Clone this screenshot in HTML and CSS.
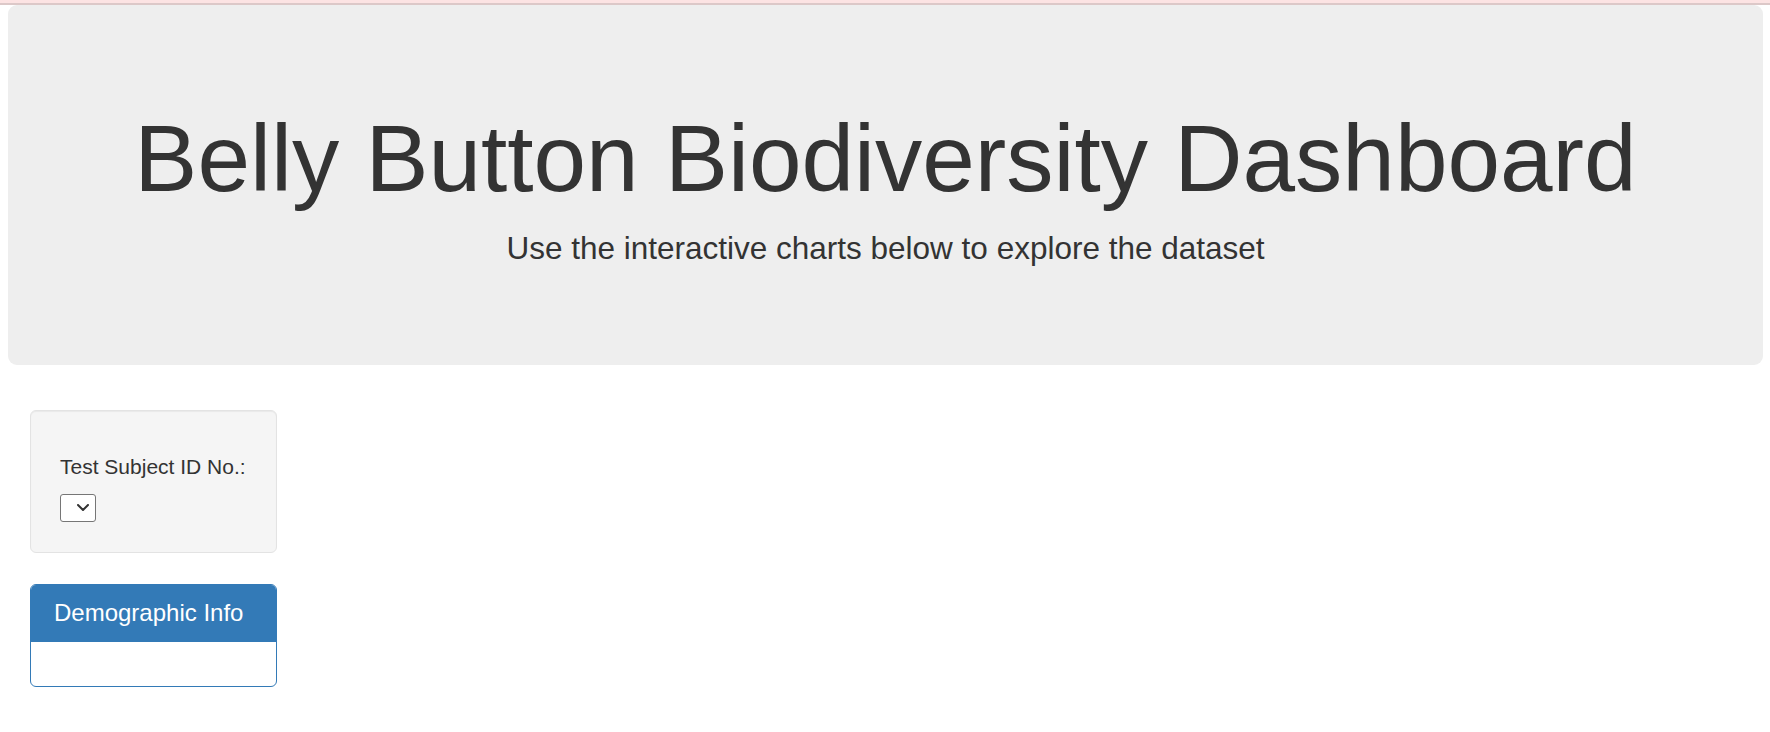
FILE: index.html
```html
<!DOCTYPE html>
<html lang="en">
<head>
<meta charset="utf-8">
<title>Belly Button Biodiversity Dashboard</title>
<link rel="stylesheet" href="styles.css">
</head>
<body>
<div class="topbar"></div>
<div class="jumbotron">
  <h1 class="title">Belly Button Biodiversity Dashboard</h1>
  <p class="lead">Use the interactive charts below to explore the dataset</p>
</div>
<div class="main">
  <div class="sidebar">
    <div class="well">
      <h5 class="field-label">Test Subject ID No.:</h5>
      <span class="select-box" role="combobox" aria-label="Test Subject ID No.">
        <svg class="chevron" width="12" height="7" viewBox="0 0 12 7"><path d="M1 1 L6 6 L11 1" fill="none" stroke="#333" stroke-width="2" stroke-linecap="round" stroke-linejoin="round"/></svg>
      </span>
    </div>
    <div class="panel">
      <div class="panel-heading">
        <h3 class="panel-title">Demographic Info</h3>
      </div>
      <div class="panel-body"></div>
    </div>
  </div>
</div>
</body>
</html>
```

FILE: styles.css
```css
html, body {
  margin: 0;
  padding: 0;
  background: #fff;
  font-family: "Liberation Sans", Arial, Helvetica, sans-serif;
  color: #333;
}

.topbar {
  height: 3px;
  background: #fce3e3;
  border-bottom: 2px solid #dcc8c8;
}

.jumbotron {
  margin: 0 7px 0 8px;
  padding: 72px 0;
  background: #eeeeee;
  border-radius: 9px;
  text-align: center;
  color: #333;
}

.title {
  margin: 30px 0 15px;
  font-size: 94.5px;
  line-height: 1.1;
  font-weight: 400;
}

.lead {
  margin: 0 0 22px;
  font-size: 31.5px;
  line-height: 45px;
  font-weight: 400;
}

.main {
  padding: 45px 0 0 30px;
}

.sidebar {
  width: 247px;
}

.well {
  box-sizing: border-box;
  width: 247px;
  padding: 29px;
  margin-bottom: 31px;
  background: #f5f5f5;
  border: 1px solid #e3e3e3;
  border-radius: 6px;
  box-shadow: inset 0 1px 1px rgba(0, 0, 0, 0.05);
}

.field-label {
  margin: 15px 0 16px;
  font-size: 21px;
  line-height: 23px;
  font-weight: 400;
  color: #333;
}

.select-box {
  box-sizing: border-box;
  display: flex;
  align-items: center;
  justify-content: flex-end;
  width: 36px;
  height: 28px;
  margin-bottom: 1px;
  padding-right: 6px;
  background: #fff;
  border: 1px solid #767676;
  border-radius: 3px;
}

.chevron {
  display: block;
}

.panel {
  box-sizing: border-box;
  width: 247px;
  border: 1px solid #337ab7;
  border-radius: 6px;
  background: #fff;
}

.panel-heading {
  padding: 15px 23px;
  background: #337ab7;
  border-bottom: 1px solid #337ab7;
  border-radius: 5px 5px 0 0;
  color: #fff;
}

.panel-title {
  margin: 0;
  font-size: 24px;
  line-height: 26.4px;
  font-weight: 400;
  color: #fff;
}

.panel-body {
  padding: 22px;
}
```
